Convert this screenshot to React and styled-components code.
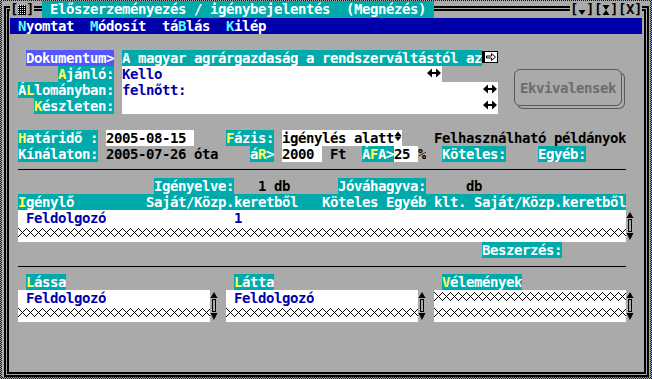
import React from 'react';
import styled, { createGlobalStyle } from 'styled-components';

const GRAY = '#aaaaaa';
const TEAL = '#00aaaa';
const NAVY = '#0000aa';
const YELLOW = '#ffff55';
const CYAN = '#55ffff';
const WHITE = '#ffffff';
const LBLUE = '#5555ff';

const Global = createGlobalStyle`
  html, body { margin: 0; padding: 0; }
  body {
    width: 652px;
    height: 379px;
    overflow: hidden;
    background-color: ${GRAY};
    background-image: repeating-conic-gradient(${NAVY} 0 25%, ${GRAY} 0 50%);
    background-size: 2px 2px;
  }
`;

const Window = styled.div`
  position: relative;
  margin: 1px 0 0 2px;
  width: 648px;
  height: 376px;
  background: ${GRAY};
  font-family: "DejaVu Sans Mono", "Liberation Mono", monospace;
  font-weight: bold;
  font-size: 14px;
  letter-spacing: -0.43px;
  line-height: 16px;
  color: #000;
  &::before,
  &::after {
    content: "";
    position: absolute;
    border: 2px solid #000;
    pointer-events: none;
  }
  &::before { left: 2px; top: 5px; right: 1px; bottom: 0; }
  &::after { left: 5px; top: 8px; right: 4px; bottom: 3px; }
`;

const TitleBar = styled.div`
  position: relative;
  z-index: 1;
  display: flex;
  height: 17px;
  padding-left: 8px;
`;

const BoxGroup = styled.div`
  display: flex;
  background: ${GRAY};
  margin-right: ${p => p.$mr || 0}px;
`;

const BoxChar = styled.span`
  width: 8px;
  line-height: 17px;
  display: flex;
  align-items: center;
  justify-content: center;
`;

const Title = styled.div`
  width: 384px;
  margin-left: 8px;
  padding-left: 8px;
  background: ${TEAL};
  color: ${WHITE};
  white-space: pre;
  line-height: 17px;
`;

const Fill = styled.div`
  flex: 1;
`;

const MenuBar = styled.div`
  display: flex;
  margin-left: 8px;
  width: 632px;
  height: 16px;
  background: ${NAVY};
  color: ${WHITE};
`;

const MenuItem = styled.span`
  white-space: pre;
`;

const Hot = styled.span`
  color: ${p => p.$c || YELLOW};
`;

const Grid = styled.div`
  display: grid;
  grid-template-columns: repeat(81, 8px);
  grid-auto-rows: 16px;
  margin-top: ${p => p.$gap || 0}px;
`;

const Cell = styled.div`
  grid-column: ${p => p.$c + 1} / span ${p => p.$w || 1};
  grid-row: ${p => (p.$r || 0) + 1} / span ${p => p.$h || 1};
  white-space: pre;
  overflow: hidden;
`;

const Label = styled(Cell)`
  background: ${p => (p.$focus ? LBLUE : TEAL)};
  color: ${WHITE};
`;

const Field = styled(Cell)`
  background: ${p => p.$bg || WHITE};
  color: ${p => p.$fg || '#000'};
`;

const Glyph = styled(Cell)`
  display: flex;
  align-items: flex-start;
  & > svg { display: block; }
`;

const Text = styled(Cell)``;

const Separator = styled.div`
  margin: ${p => p.$top}px 0 ${p => 15 - p.$top}px 16px;
  width: 608px;
  height: 1px;
  background: #000;
`;

const EkvButton = styled.div`
  grid-column: 65 / span 14;
  grid-row: 2 / span 3;
  align-self: start;
  box-sizing: border-box;
  margin: 3px 0 0 0;
  width: 108px;
  height: 37px;
  border: 1px solid #5a5a5a;
  border-radius: 6px;
  box-shadow: 3px 3px 0 -1px ${GRAY}, 3px 3px 0 0 #5a5a5a;
  display: flex;
  align-items: center;
  justify-content: center;
  color: #6c6c6c;
  padding-top: 1px;
`;

const HatchSvg = styled.svg`
  display: block;
`;

/* ---------- drawings ---------- */

const Shade = () => (
  <svg width="8" height="17" viewBox="0 0 8 17">
    <defs>
      <pattern id="shadeP" width="2" height="2" patternUnits="userSpaceOnUse">
        <rect width="2" height="2" fill="#000" />
        <rect width="1" height="1" fill="#fff" />
      </pattern>
    </defs>
    <rect x="0" y="4" width="8" height="10" fill="url(#shadeP)" />
  </svg>
);

const MinGlyph = () => (
  <svg width="8" height="17" viewBox="0 0 8 17">
    <path d="M0.5 9 H7.5 L4 14 Z" fill="#000" />
  </svg>
);

const MaxGlyph = () => (
  <svg width="8" height="17" viewBox="0 0 8 17">
    <path d="M0.5 4 H7.5 L4 9 Z M4 9 L7.5 14 H0.5 Z" fill="#000" />
  </svg>
);

const DocArrow = () => (
  <svg width="16" height="16" viewBox="0 0 16 16">
    <rect x="0.5" y="1.5" width="15" height="11" fill="#fff" stroke="#000" />
    <rect x="1" y="2" width="2" height="10" fill="#000" />
    <path d="M4.5 6 H9.5 V3.5 L13.5 7 L9.5 10.5 V8 H4.5 Z" fill="none" stroke="#000" />
  </svg>
);

const LeftRight = () => (
  <svg width="16" height="16" viewBox="0 0 16 16">
    <path d="M1 7 L6 2.5 V11.5 Z M15 7 L10 2.5 V11.5 Z M6 6 H10 V8 H6 Z" fill="#000" />
  </svg>
);

const UpDown = () => (
  <svg width="8" height="16" viewBox="0 0 8 16">
    <path d="M4 1.5 L7.5 6 H0.5 Z M0.5 6.5 H7.5 L4 11 Z" fill="#000" />
  </svg>
);

const ScrollBar = () => (
  <svg width="8" height="32" viewBox="0 0 8 32">
    <path d="M4 2 L7.5 8 H0.5 Z" fill="#000" />
    <rect x="2.5" y="9.5" width="3" height="12" fill="none" stroke="#000" />
    <path d="M0.5 23 H7.5 L4 30 Z" fill="#000" />
  </svg>
);

const hatchDots = [];
for (let k = 0; k <= 8; k += 1) {
  hatchDots.push(<rect key={`a${k}`} x={k % 8} y={2 + k} width="1" height="1" />);
  hatchDots.push(<rect key={`b${k}`} x={(8 - k) % 8} y={2 + k} width="1" height="1" />);
}

let hatchId = 0;
const Hatch = ({ width }) => {
  const id = `hatch${hatchId++}`;
  return (
    <HatchSvg width={width} height="16" viewBox={`0 0 ${width} 16`} shapeRendering="crispEdges">
      <defs>
        <pattern id={id} width="8" height="16" patternUnits="userSpaceOnUse">
          <g fill="#000">{hatchDots}</g>
        </pattern>
      </defs>
      <rect width={width} height="16" fill={`url(#${id})`} />
    </HatchSvg>
  );
};

/* ---------- page ---------- */

export default function App() {
  return (
    <>
      <Global />
      <Window>
        <TitleBar>
          <BoxGroup>
            <BoxChar>[</BoxChar>
            <BoxChar><Shade /></BoxChar>
            <BoxChar>]</BoxChar>
          </BoxGroup>
          <Title>Előszerzeményezés / igénybejelentés  (Megnézés) </Title>
          <Fill />
          <BoxGroup $mr={8}>
            <BoxChar>[</BoxChar>
            <BoxChar><MinGlyph /></BoxChar>
            <BoxChar>]</BoxChar>
            <BoxChar>[</BoxChar>
            <BoxChar><MaxGlyph /></BoxChar>
            <BoxChar>]</BoxChar>
            <BoxChar>[</BoxChar>
            <BoxChar>X</BoxChar>
            <BoxChar>]</BoxChar>
          </BoxGroup>
        </TitleBar>

        <MenuBar>
          <MenuItem> <Hot $c={CYAN}>N</Hot>yomtat </MenuItem>
          <MenuItem> <Hot $c={CYAN}>M</Hot>ódosít </MenuItem>
          <MenuItem> tá<Hot $c={CYAN}>B</Hot>lás </MenuItem>
          <MenuItem> <Hot $c={CYAN}>K</Hot>ilép </MenuItem>
        </MenuBar>

        <Grid $gap={16}>
          <Label $c={3} $w={11} $r={0} $focus>Dokumentum&gt;</Label>
          <Field $c={15} $w={45} $r={0} $bg={TEAL} $fg={WHITE}>A magyar agrárgazdaság a rendszerváltástól az</Field>
          <Glyph $c={60} $w={2} $r={0}><DocArrow /></Glyph>

          <Label $c={7} $w={7} $r={1}><Hot>A</Hot>jánló:</Label>
          <Field $c={15} $w={40} $r={1} $fg={NAVY}>Kello</Field>
          <Glyph $c={53} $w={2} $r={1}><LeftRight /></Glyph>

          <Label $c={2} $w={12} $r={2}>Á<Hot>L</Hot>lományban:</Label>
          <Field $c={15} $w={47} $r={2} $fg={NAVY}>felnőtt:</Field>
          <Glyph $c={60} $w={2} $r={2}><LeftRight /></Glyph>

          <Label $c={4} $w={10} $r={3}><Hot>K</Hot>észleten:</Label>
          <Field $c={15} $w={47} $r={3} />
          <Glyph $c={60} $w={2} $r={3}><LeftRight /></Glyph>

          <EkvButton>Ekvivalensek</EkvButton>
        </Grid>

        <Grid $gap={16}>
          <Label $c={2} $w={10} $r={0}><Hot>H</Hot>atáridő :</Label>
          <Field $c={13} $w={11} $r={0}>2005-08-15</Field>
          <Label $c={28} $w={6} $r={0}><Hot>F</Hot>ázis:</Label>
          <Field $c={35} $w={15} $r={0}>igénylés alatt</Field>
          <Glyph $c={49} $w={1} $r={0}><UpDown /></Glyph>
          <Text $c={54} $w={24} $r={0}>Felhasználható példányok</Text>

          <Label $c={2} $w={10} $r={1}>Kínálaton:</Label>
          <Text $c={13} $w={14} $r={1}>2005-07-26 óta</Text>
          <Label $c={31} $w={3} $r={1}>á<Hot>R</Hot>&gt;</Label>
          <Field $c={35} $w={5} $r={1}>2000</Field>
          <Text $c={41} $w={2} $r={1}>Ft</Text>
          <Label $c={45} $w={4} $r={1}>Á<Hot>F</Hot>A&gt;</Label>
          <Field $c={49} $w={3} $r={1}>25</Field>
          <Text $c={52} $w={1} $r={1}>%</Text>
          <Label $c={55} $w={8} $r={1}>Köteles:</Label>
          <Label $c={67} $w={6} $r={1}>Egyéb:</Label>
        </Grid>

        <Separator $top={7} />

        <Grid>
          <Label $c={19} $w={10} $r={0}>Igényelve:</Label>
          <Text $c={32} $w={4} $r={0}>1 db</Text>
          <Label $c={42} $w={11} $r={0}>Jóváhagyva:</Label>
          <Text $c={58} $w={2} $r={0}>db</Text>

          <Label $c={2} $w={76} $r={1}><Hot>I</Hot>{'génylő         Saját/Közp.keretből   Köteles Egyéb klt. Saját/Közp.keretből'}</Label>

          <Field $c={2} $w={76} $r={2} $h={2} />
          <Field $c={3} $w={10} $r={2} $bg="transparent" $fg={NAVY}>Feldolgozó</Field>
          <Field $c={29} $w={1} $r={2} $bg="transparent" $fg={NAVY}>1</Field>
          <Glyph $c={2} $w={76} $r={3}><Hatch width={608} /></Glyph>
          <Glyph $c={78} $w={1} $r={2} $h={2}><ScrollBar /></Glyph>

          <Label $c={60} $w={10} $r={4}>Beszerzés:</Label>
        </Grid>

        <Separator $top={8} />

        <Grid>
          <Label $c={3} $w={5} $r={0}><Hot>L</Hot>ássa</Label>
          <Label $c={29} $w={5} $r={0}><Hot>L</Hot>átta</Label>
          <Label $c={55} $w={10} $r={0}><Hot>V</Hot>élemények</Label>

          <Field $c={2} $w={24} $r={1} $h={2} />
          <Field $c={3} $w={10} $r={1} $bg="transparent" $fg={NAVY}>Feldolgozó</Field>
          <Glyph $c={2} $w={24} $r={2}><Hatch width={192} /></Glyph>
          <Glyph $c={26} $w={1} $r={1} $h={2}><ScrollBar /></Glyph>

          <Field $c={28} $w={24} $r={1} $h={2} />
          <Field $c={29} $w={10} $r={1} $bg="transparent" $fg={NAVY}>Feldolgozó</Field>
          <Glyph $c={28} $w={24} $r={2}><Hatch width={192} /></Glyph>
          <Glyph $c={52} $w={1} $r={1} $h={2}><ScrollBar /></Glyph>

          <Field $c={54} $w={24} $r={1} $h={2} />
          <Glyph $c={54} $w={24} $r={1}><Hatch width={192} /></Glyph>
          <Glyph $c={54} $w={24} $r={2}><Hatch width={192} /></Glyph>
          <Glyph $c={78} $w={1} $r={1} $h={2}><ScrollBar /></Glyph>
        </Grid>
      </Window>
    </>
  );
}
